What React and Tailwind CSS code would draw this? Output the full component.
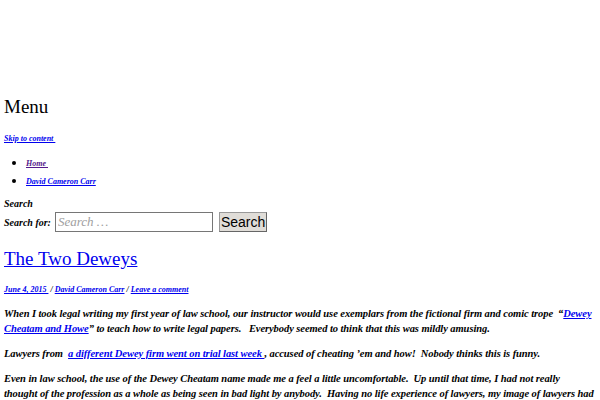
import React from 'react';

const serif = { fontFamily: '"Liberation Serif", "DejaVu Serif", serif' };

export default function App() {
  return (
    <div className="w-[600px] h-[400px] overflow-hidden bg-white text-black" style={serif}>
      <div className="pl-[4px]">
        <div className="h-[96px]" />
        <div className="text-[19px] leading-[22px]">Menu</div>
        <div className="mt-[16px] text-[8px] leading-[10px] font-bold italic">
          <a href="#" className="text-[#0000ee] underline">Skip to content&nbsp;</a>
        </div>
        <ul className="mt-[10px] list-disc pl-[22px] text-[12px] leading-[16px]">
          <li><a href="#" className="text-[8px] font-bold italic text-[#551a8b] underline">Home&nbsp;</a></li>
          <li><a href="#" className="text-[8px] font-bold italic text-[#0000ee] underline">David Cameron Carr</a></li>
        </ul>
        <div className="mt-[7px] text-[10px] leading-[14px] font-bold italic">Search</div>
        <div className="mt-[1px] flex items-center gap-[4px]">
          <span className="text-[10px] font-bold italic">Search for:</span>
          <input
            className="w-[158px] h-[20px] border border-[#767676] px-[2px] text-[13px] italic placeholder-[#a0a0a0] outline-none"
            placeholder="Search …"
            style={serif}
          />
          <button
            className="ml-[2px] h-[20px] px-[1px] bg-[#e0ddd8] border border-[#999] border-r-[#666] border-b-[#666] text-[14px] leading-[18px]"
            style={{ fontFamily: '"Liberation Sans", Arial, sans-serif' }}
          >
            Search
          </button>
        </div>
        <h1 className="mt-[15px] text-[19px] leading-[24px]">
          <a href="#" className="text-[#0000ee] underline">The Two Deweys</a>
        </h1>
        <div className="mt-[14px] text-[8px] leading-[10px] font-bold italic">
          <a href="#" className="text-[#0000ee] underline">June 4, 2015&nbsp;</a>&nbsp;/ <a href="#" className="text-[#0000ee] underline">David Cameron Carr</a> / <a href="#" className="text-[#0000ee] underline">Leave a comment</a>
        </div>
        <div className="mt-[11px] w-[596px] text-[10.5px] leading-[15px] font-bold italic tracking-[-0.07px]">
          <p>
            When I took legal writing my first year of law school, our instructor would use exemplars from the fictional firm and comic trope &nbsp;“<a href="#" className="text-[#0000ee] underline">Dewey Cheatam and Howe</a>” to teach how to write legal papers. &nbsp; Everybody seemed to think that this was mildly amusing.
          </p>
          <p className="mt-[10px]">
            Lawyers from &nbsp;<a href="#" className="text-[#0000ee] underline">a different Dewey firm went on trial last week </a>, accused of cheating ’em and how! &nbsp;Nobody thinks this is funny.
          </p>
          <p className="mt-[10px]">
            Even in law school, the use of the Dewey Cheatam name made me a feel a little uncomfortable. &nbsp;Up until that time, I had not really<br />thought of the profession as a whole as being seen in bad light by anybody. &nbsp;Having no life experience of lawyers, my image of lawyers had come from television and movies.
          </p>
        </div>
      </div>
    </div>
  );
}
